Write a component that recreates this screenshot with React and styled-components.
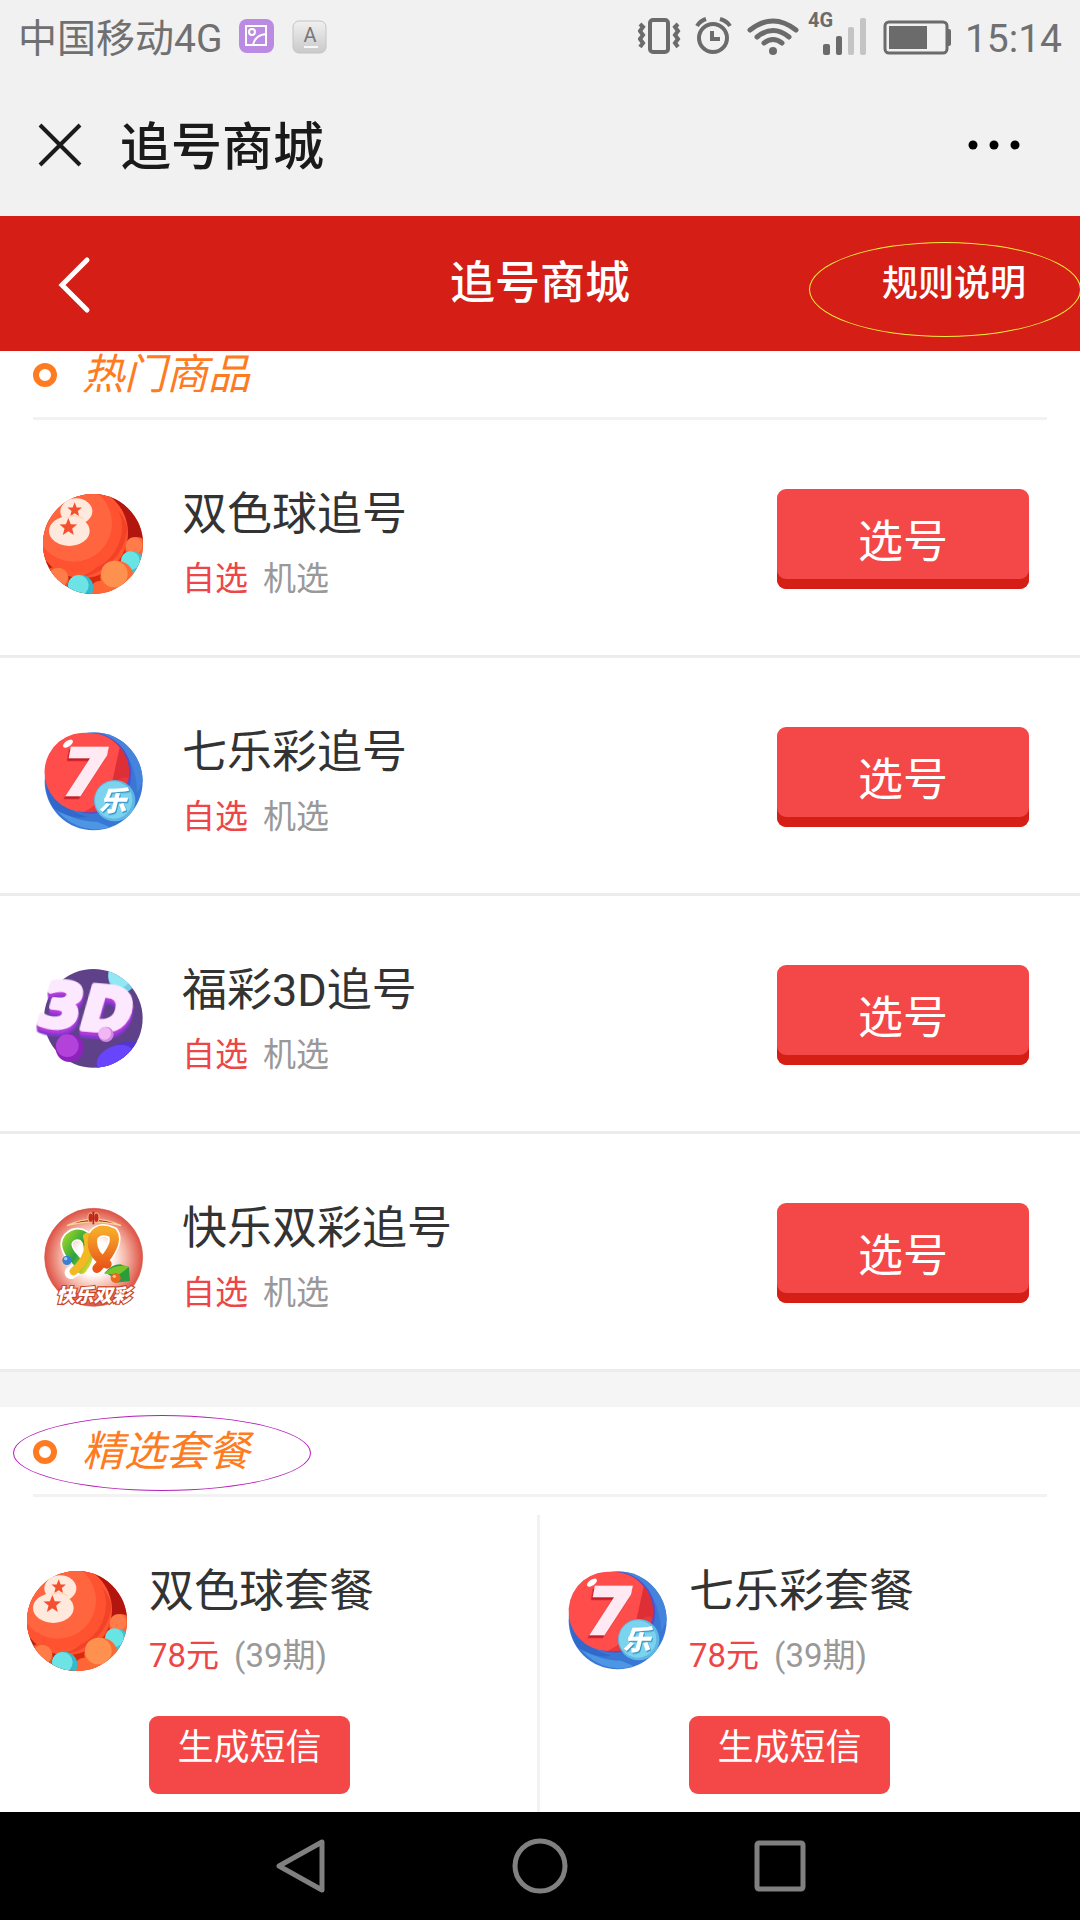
import React from "react";
import styled, { createGlobalStyle } from "styled-components";

const GlobalStyle = createGlobalStyle`
  * {
    box-sizing: border-box;
  }
  body {
    margin: 0;
    background-color: #ffffff;
    font-family: Roboto, "Noto Sans CJK SC", sans-serif;
  }
  h1, h2, h3, p, ul {
    margin: 0;
    padding: 0;
    font-weight: 400;
  }
  button {
    margin: 0;
    padding: 0;
    border: none;
    background: none;
    font-family: inherit;
    cursor: pointer;
  }
  svg {
    display: block;
    flex: none;
  }
`;

const Page = styled.div`
  display: flex;
  flex-direction: column;
  min-height: 100vh;
  overflow-x: hidden;
`;

const StatusBar = styled.div`
  display: flex;
  align-items: center;
  justify-content: space-between;
  height: 72px;
  padding: 0 18px;
  background-color: #f1f1f1;
  color: #707070;
`;

const StatusGroup = styled.div`
  display: flex;
  align-items: center;
  gap: ${(props) => props.$gap}px;
`;

const StatusText = styled.span`
  padding-top: 5px;
  font-size: 39px;
  line-height: 48px;
`;

const TitleBar = styled.div`
  display: flex;
  align-items: center;
  height: 144px;
  padding: 2px 60px 0 36px;
  background-color: #f1f1f1;
`;

const PageTitle = styled.h1`
  flex: 1;
  margin-left: 36px;
  padding-top: 6px;
  color: #1a1a1a;
  font-size: 51px;
  font-weight: 500;
  line-height: 60px;
`;

const Header = styled.header`
  display: grid;
  grid-template-columns: 1fr auto 1fr;
  align-items: center;
  height: 135px;
  padding: 0 54px;
  background-color: #d41e16;
  color: #ffffff;
`;

const HeaderTitle = styled.h2`
  font-size: 45px;
  font-weight: 500;
  line-height: 60px;
`;

const RulesLink = styled.a`
  position: relative;
  justify-self: end;
  color: #ffffff;
  font-size: 36px;
  font-weight: 500;
  line-height: 48px;
  text-decoration: none;
`;

const Ring = styled.span`
  position: absolute;
  top: ${(props) => props.$top}px;
  left: ${(props) => props.$left}px;
  width: ${(props) => props.$width}px;
  height: ${(props) => props.$height}px;
  border: 1px solid ${(props) => props.$color};
  border-radius: 50%;
  pointer-events: none;
`;

const SectionHead = styled.div`
  position: relative;
  display: flex;
  align-items: center;
  gap: 25px;
  margin: 0 33px;
  padding: ${(props) => (props.$first ? 0 : 21)}px 0 18px;
  border-bottom: 3px solid #f2f2f2;
  color: #ff7b21;
`;

const Bullet = styled.span`
  width: 24px;
  height: 24px;
  border: 6px solid #ff7b21;
  border-radius: 50%;
`;

const SectionTitle = styled.h3`
  font-size: 42px;
  font-style: italic;
  line-height: 48px;
`;

const List = styled.ul`
  list-style: none;
`;

const Row = styled.li`
  display: flex;
  align-items: center;
  min-height: 238px;
  padding: 0 51px 0 43px;
  border-bottom: 3px solid #ececec;
`;

const Ball = styled.svg`
  width: 100px;
  height: 100px;
  margin-top: 12px;
  overflow: visible;
`;

const RaisedText = styled.text`
  filter: drop-shadow(${(props) => props.$shadow});
`;

// two stacked shadows give the letters their thick lower side
const ThickText = styled.text`
  filter: drop-shadow(1px 10px 0 #b338d6) drop-shadow(1px 9px 0 #8038d2);
`;

const RowInfo = styled.div`
  flex: 1;
  margin-left: 39px;
  padding-top: 16px;
`;

const Name = styled.p`
  color: #333333;
  font-size: 45px;
  line-height: 66px;
`;

const Meta = styled.p`
  display: flex;
  gap: 15px;
  color: #999999;
  font-size: 33px;
  line-height: 62px;
`;

const Accent = styled.span`
  color: #ee4547;
`;

const PickButton = styled.button`
  width: 252px;
  height: 100px;
  margin-top: 3px;
  padding-top: 7px;
  border-radius: 9px;
  background-color: #f44747;
  box-shadow: inset 0 -10px 0 #d41e16;
  color: #ffffff;
  font-size: 45px;
  line-height: 60px;
`;

const Gap = styled.div`
  height: 35px;
  background-color: #f5f5f5;
`;

const Packages = styled.div`
  display: grid;
  flex: 1;
  grid-template-columns: 1fr 1fr;
  padding-top: 18px;
`;

const Card = styled.div`
  display: flex;
  align-items: flex-start;
  gap: 22px;
  padding: 44px 0 18px 27px;
  border-right: ${(props) => (props.$last ? "none" : "3px solid #f2f2f2")};
`;

const SmsButton = styled.button`
  width: 201px;
  height: 78px;
  margin-top: 29px;
  padding-bottom: 14px;
  border-radius: 9px;
  background-color: #f44747;
  color: #ffffff;
  font-size: 36px;
  line-height: 48px;
`;

const NavBar = styled.nav`
  display: flex;
  align-items: center;
  justify-content: center;
  gap: 180px;
  height: 108px;
  background-color: #000000;
`;

const STAR = "M0-10 2.6-3.4 9.5-3.1 4.1 1.3 5.9 8.1 0 4.2-5.9 8.1-4.1 1.3-9.5-3.1-2.6-3.4Z";

const DoubleBall = () => (
  <Ball viewBox="68 72 300 300">
    <defs>
      <clipPath id="doubleClip">
        <circle cx="218" cy="222" r="150" />
      </clipPath>
    </defs>
    <g clipPath="url(#doubleClip)">
      <rect x="68" y="72" width="300" height="300" fill="#d92a10" />
      <path d="M210 72H368V220H320Q320 120 210 72Z" fill="#b3150f" />
      <path d="M68 230Q110 310 200 320L210 372H68Z" fill="#b92312" />
      <circle cx="186" cy="188" r="137" fill="#ff5531" />
      <path d="M215 74A137 137 0 0 1 165 323A165 165 0 0 0 322 175A137 137 0 0 0 215 74Z" fill="#f24328" />
      <circle cx="172" cy="172" r="133" fill="#ff5230" />
      <circle cx="160" cy="160" r="115" fill="#ff6640" />
      <circle cx="350" cy="236" r="35" fill="#f8663a" />
      <circle cx="341" cy="227" r="25" fill="#ff7c4a" />
      <circle cx="338" cy="280" r="35" fill="#3ac4d4" />
      <circle cx="330" cy="272" r="28" fill="#69e4e4" />
      <circle cx="107" cy="328" r="38" fill="#f0572d" />
      <circle cx="114" cy="322" r="29" fill="#ff7c49" />
      <circle cx="242" cy="366" r="34" fill="#ff6537" />
      <circle cx="290" cy="322" r="50" fill="#fb6b33" />
      <circle cx="282" cy="312" r="40" fill="#ff9150" />
      <circle cx="180" cy="353" r="39" fill="#37b9cc" />
      <circle cx="174" cy="346" r="31" fill="#6ce4e5" />
    </g>
    <g fill="#ffe9dd">
      <ellipse cx="168" cy="124" rx="48" ry="39" />
      <ellipse cx="147" cy="183" rx="61" ry="45" />
    </g>
    <g fill="#f4502f">
      <path d={STAR} transform="translate(163 120) scale(2.3)" />
      <path d={STAR} transform="translate(144 172) scale(2.8)" />
    </g>
    <path d="M140 144Q164 130 190 146" fill="none" stroke="#ffd9bd" strokeWidth="5" />
  </Ball>
);

const SevenBall = () => (
  <Ball viewBox="68 66 300 300">
    <circle cx="220" cy="214" r="147" fill="#3977d4" />
    <path d="M248 70A147 147 0 0 1 367 214L350 250Q350 130 248 70Z" fill="#4484dc" />
    <path d="M100 285Q150 335 230 335L270 352A147 147 0 0 1 100 285Z" fill="#4d96e4" />
    <path d="M78 180Q90 290 200 320Q150 330 100 295Q70 250 78 180Z" fill="#3168cb" />
    <circle cx="212" cy="190" r="121" fill="#5a4bc6" />
    <circle cx="207" cy="188" r="119" fill="#e93839" />
    <path d="M207 69A119 119 0 1 0 190 306Q300 250 298 113A119 119 0 0 0 207 69Z" fill="#ff4d4b" />
    <path d="M298 113A119 119 0 0 1 325 205Q300 190 270 240Z" fill="#dd2f35" />
    <ellipse cx="143" cy="101" rx="17" ry="9" fill="#ffffff" transform="rotate(-35 143 101)" />
    <RaisedText
      $shadow="-5px 8px 0 #c51d28"
      x="127"
      y="256"
      fontFamily="DejaVu Sans"
      fontWeight="700"
      fontStyle="italic"
      fontSize="192"
      strokeWidth="8"
      fill="#ffeaf3"
      stroke="#ffeaf3"
    >
      7
    </RaisedText>
    <circle cx="283" cy="272" r="62" fill="#5fb6e4" />
    <circle cx="280" cy="270" r="56" fill="#7bd3ee" />
    <RaisedText
      $shadow="3px 4px 0 #3998c8"
      x="235"
      y="304"
      fontFamily="Noto Sans CJK SC"
      fontWeight="900"
      fontStyle="italic"
      fontSize="84"
      fill="#ffffff"
    >
      乐
    </RaisedText>
  </Ball>
);

const ThreeDBall = () => (
  <Ball viewBox="68 60 300 300">
    <defs>
      <clipPath id="threeClip">
        <circle cx="219" cy="205" r="148" />
      </clipPath>
    </defs>
    <g clipPath="url(#threeClip)">
      <rect x="70" y="57" width="298" height="298" fill="#5f4189" />
      <ellipse cx="306" cy="80" rx="42" ry="48" fill="#72cfe9" />
      <ellipse cx="298" cy="75" rx="34" ry="38" fill="#92e7f5" />
      <ellipse cx="300" cy="325" rx="77" ry="42" fill="#5136d2" transform="rotate(-25 300 325)" />
      <ellipse cx="284" cy="326" rx="58" ry="37" fill="#6845fc" transform="rotate(-25 284 326)" />
    </g>
    <ThickText
      x="62"
      y="238"
      transform="rotate(5 200 170)"
      fontFamily="DejaVu Sans"
      fontWeight="700"
      fontStyle="italic"
      fontSize="180"
      strokeWidth="16"
      strokeLinejoin="round"
      fill="#fde9ff"
      stroke="#fde9ff"
    >
      3D
    </ThickText>
    <circle cx="148" cy="294" r="42" fill="#8d22bd" />
    <circle cx="141" cy="287" r="34" fill="#b342db" />
    <circle cx="257" cy="253" r="23" fill="#d088e2" />
    <circle cx="253" cy="250" r="19" fill="#f1b6f3" />
  </Ball>
);

const HappyBall = () => (
  <Ball viewBox="68 54 300 300">
    <defs>
      <radialGradient id="happyBg">
        <stop offset="0.35" stopColor="#ffffff" />
        <stop offset="0.65" stopColor="#f6b7a8" />
        <stop offset="1" stopColor="#dd5144" />
      </radialGradient>
      <linearGradient id="greenRibbon" x1="0" y1="0" x2="1" y2="1">
        <stop offset="0" stopColor="#8fd02c" />
        <stop offset="0.5" stopColor="#2ba23c" />
        <stop offset="1" stopColor="#e3d930" />
      </linearGradient>
      <linearGradient id="orangeRibbon" x1="0" y1="0" x2="0" y2="1">
        <stop offset="0" stopColor="#f7a928" />
        <stop offset="1" stopColor="#e85419" />
      </linearGradient>
    </defs>
    <circle cx="220" cy="202" r="147" fill="url(#happyBg)" stroke="#d95a4b" strokeWidth="2" />
    <path d="M140 107Q220 68 302 107Q220 84 140 107Z" fill="#c9271e" stroke="#f8d59a" strokeWidth="4" />
    <ellipse cx="211" cy="83" rx="8" ry="14" fill="#c9271e" stroke="#f8c48b" strokeWidth="3" />
    <ellipse cx="228" cy="83" rx="8" ry="14" fill="#c9271e" stroke="#f8c48b" strokeWidth="3" />
    <path d="M219 65V103" stroke="#b81d1b" strokeWidth="5" />
    <g fill="none" strokeLinecap="round">
      <path d="M152 248Q210 215 206 165Q196 125 160 134Q124 152 150 192L212 240" stroke="#ffffff" strokeWidth="38" />
      <path d="M250 225Q207 190 218 140Q236 110 276 128Q300 160 226 238" stroke="#ffffff" strokeWidth="38" />
      <path d="M184 238Q214 205 201 155Q188 125 158 136Q124 154 152 194L176 222" stroke="url(#greenRibbon)" strokeWidth="28" />
      <path d="M200 140Q218 193 160 244" stroke="#f4b822" strokeWidth="24" />
      <path d="M260 222Q207 190 218 140Q236 110 276 128Q300 160 230 235" stroke="url(#orangeRibbon)" strokeWidth="28" />
    </g>
    <path d="M252 250Q272 224 300 223L326 232L329 273L286 278Q270 250 252 250Z" fill="#299d3c" />
    <path d="M252 250Q284 220 325 230Q306 249 292 255Z" fill="#7bc32b" />
    <circle cx="140" cy="211" r="14" fill="#3980d2" />
    <circle cx="136" cy="206" r="5" fill="#9dd0f7" />
    <circle cx="286" cy="264" r="15" fill="#ec6720" />
    <circle cx="282" cy="259" r="5" fill="#fac878" />
    <text
      x="108"
      y="335"
      fontFamily="Noto Sans CJK SC"
      fontWeight="900"
      fontStyle="italic"
      fontSize="56"
      fill="#ffffff"
      stroke="#cb4325"
      strokeWidth="7"
      paintOrder="stroke"
    >
      快乐双彩
    </text>
  </Ball>
);

const products = [
  { name: "双色球追号", Icon: DoubleBall },
  { name: "七乐彩追号", Icon: SevenBall },
  { name: "福彩3D追号", Icon: ThreeDBall },
  { name: "快乐双彩追号", Icon: HappyBall },
];

const packages = [
  { name: "双色球套餐", Icon: DoubleBall },
  { name: "七乐彩套餐", Icon: SevenBall },
];

const CarrierIcons = () => (
  <svg width="88" height="72" viewBox="239 0 88 72">
    <defs>
      <linearGradient id="keyFace" x1="0" y1="0" x2="0" y2="1">
        <stop offset="0" stopColor="#f0f0f0" />
        <stop offset="1" stopColor="#c9c9c9" />
      </linearGradient>
    </defs>
    <rect x="239" y="19" width="35" height="34" rx="8" fill="#bb8be4" />
    <g fill="none" stroke="#ffffff" strokeWidth="2">
      <rect x="246" y="26" width="20" height="19" />
      <circle cx="252" cy="32" r="3" />
      <path d="M253 45Q255 35 266 34" />
    </g>
    <rect x="293" y="21" width="33" height="32" rx="6" fill="url(#keyFace)" stroke="#c4c4c4" />
    <path d="M304 47H318" stroke="#f8f8f8" strokeWidth="2" />
    <text x="310" y="42" textAnchor="middle" fontFamily="Roboto" fontSize="20" fill="#777777">A</text>
  </svg>
);

const SignalIcons = () => (
  <svg width="313" height="72" viewBox="638 0 313 72" fill="none" stroke="#6b6b6b">
    <rect x="650" y="20" width="18" height="32" rx="3" strokeWidth="4" />
    <path d="M640 24L643 27 640 31 643 35 640 39 643 43 640 47M678 24L675 27 678 31 675 35 678 39 675 43 678 47" strokeWidth="4" />
    <circle cx="713" cy="38" r="14" strokeWidth="4" />
    <path d="M712 31V39H720" strokeWidth="4" />
    <path d="M697 26Q700 21 706 19M720 19Q727 21 730 26" strokeWidth="4" />
    <path d="M750 30Q773 12 796 30M757 37Q773 24 789 37M764 43Q773 36 782 43" strokeWidth="5" strokeLinecap="round" />
    <circle cx="773" cy="51" r="4" fill="#6b6b6b" stroke="none" />
    <text x="808" y="27" fontFamily="Roboto" fontSize="20" fontWeight="700" fill="#6b6b6b" stroke="none">4G</text>
    <g stroke="none">
      <rect x="823" y="44" width="7" height="11" rx="2" fill="#6b6b6b" />
      <rect x="836" y="36" width="6" height="19" rx="2" fill="#6b6b6b" />
      <rect x="848" y="27" width="6" height="28" rx="2" fill="#c4c4c4" />
      <rect x="860" y="18" width="6" height="37" rx="2" fill="#c4c4c4" />
    </g>
    <rect x="885" y="22" width="62" height="31" rx="4" strokeWidth="3" />
    <rect x="889" y="26" width="38" height="23" fill="#6b6b6b" stroke="none" />
    <path d="M948 29H949Q951 29 951 31V44Q951 46 949 46H948Z" fill="#6b6b6b" stroke="none" />
  </svg>
);

const App = () => {
  return (
    <Page>
      <GlobalStyle />
      <StatusBar>
        <StatusGroup $gap={17}>
          <StatusText>中国移动4G</StatusText>
          <CarrierIcons />
        </StatusGroup>
        <StatusGroup $gap={14}>
          <SignalIcons />
          <StatusText>15:14</StatusText>
        </StatusGroup>
      </StatusBar>

      <TitleBar>
        <button aria-label="关闭">
          <svg width="48" height="48" viewBox="0 0 48 48" stroke="#1a1a1a" strokeWidth="4">
            <path d="M4 4L44 44M44 4L4 44" />
          </svg>
        </button>
        <PageTitle>追号商城</PageTitle>
        <button aria-label="更多">
          <svg width="52" height="48" viewBox="0 0 52 48" fill="#000000">
            <circle cx="5" cy="24" r="4.5" />
            <circle cx="26" cy="24" r="4.5" />
            <circle cx="47" cy="24" r="4.5" />
          </svg>
        </button>
      </TitleBar>

      <Header>
        <button aria-label="返回">
          <svg width="42" height="60" viewBox="0 0 42 60" fill="none" stroke="#ffffff" strokeWidth="5" strokeLinecap="round">
            <path d="M33 6L8 31L33 56" />
          </svg>
        </button>
        <HeaderTitle>追号商城</HeaderTitle>
        <RulesLink href="#rules">
          规则说明
          <Ring $top={-18} $left={-73} $width={272} $height={95} $color="#efef3c" />
        </RulesLink>
      </Header>

      <SectionHead $first>
        <Bullet />
        <SectionTitle>热门商品</SectionTitle>
      </SectionHead>
      <List>
        {products.map(({ name, Icon }) => (
          <Row key={name}>
            <Icon />
            <RowInfo>
              <Name>{name}</Name>
              <Meta>
                <Accent>自选</Accent>
                <span>机选</span>
              </Meta>
            </RowInfo>
            <PickButton>选号</PickButton>
          </Row>
        ))}
      </List>

      <Gap />

      <SectionHead>
        <Bullet />
        <SectionTitle>精选套餐</SectionTitle>
        <Ring $top={8} $left={-20} $width={298} $height={76} $color="#b41cba" />
      </SectionHead>
      <Packages>
        {packages.map(({ name, Icon }, index) => (
          <Card key={name} $last={index === packages.length - 1}>
            <Icon />
            <div>
              <Name>{name}</Name>
              <Meta>
                <Accent>78元</Accent>
                <span>(39期)</span>
              </Meta>
              <SmsButton>生成短信</SmsButton>
            </div>
          </Card>
        ))}
      </Packages>

      <NavBar>
        <button aria-label="后退">
          <svg width="60" height="60" viewBox="0 0 60 60" fill="none" stroke="#808080" strokeWidth="5" strokeLinejoin="round">
            <path d="M52 6V54L9 30Z" />
          </svg>
        </button>
        <button aria-label="主页">
          <svg width="60" height="60" viewBox="0 0 60 60" fill="none" stroke="#808080" strokeWidth="5">
            <circle cx="30" cy="30" r="25" />
          </svg>
        </button>
        <button aria-label="最近任务">
          <svg width="60" height="60" viewBox="0 0 60 60" fill="none" stroke="#808080" strokeWidth="5">
            <rect x="7" y="7" width="46" height="46" rx="2" />
          </svg>
        </button>
      </NavBar>
    </Page>
  );
};

export default App;
